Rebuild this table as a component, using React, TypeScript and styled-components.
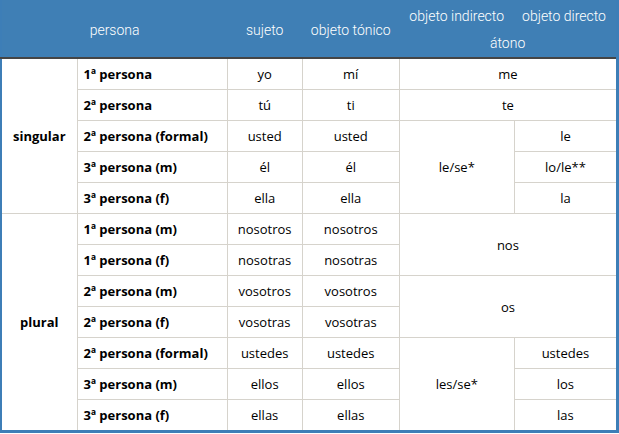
import React from "react";
import styled, { createGlobalStyle } from "styled-components";

const Global = createGlobalStyle`
  html, body { margin: 0; padding: 0; background: #ffffff; }
  body { font-family: "Open Sans", "Noto Sans", sans-serif; }
`;

const Table = styled.table`
  border-collapse: collapse;
  table-layout: fixed;
  width: 619px;
  font-family: "Open Sans", "Noto Sans", sans-serif;
  font-size: 13px;
  color: #000;
  border-left: 2px solid #3d7eb7;
  border-right: 3px solid #3d7eb7;
  border-bottom: 3px solid #3d7eb7;
`;

const HeadCell = styled.th`
  background: #3f7fb5;
  color: #ffffff;
  font-weight: 300;
  font-family: "Roboto", "Open Sans", sans-serif;
  font-size: 14px;
  line-height: 27px;
  height: 54px;
  padding: 3px 4px 0;
  text-align: center;
  border-bottom: 2px solid #454545;
`;

const Gap = styled.span`
  display: inline-block;
  width: 18px;
`;

const Cell = styled.td<{ $bold?: boolean; $align?: "left" | "center" }>`
  height: 30px;
  padding: 0 6px;
  border: 1px solid #d6d3cc;
  text-align: ${(p) => p.$align ?? "center"};
  font-weight: ${(p) => (p.$bold ? 700 : 400)};
  white-space: nowrap;
`;

const GroupCell = styled(Cell)`
  border-left: none;
`;

type Row = {
  persona: string;
  sujeto: string;
  tonico: string;
};

const singular: Row[] = [
  { persona: "1ª persona", sujeto: "yo", tonico: "mí" },
  { persona: "2ª persona", sujeto: "tú", tonico: "ti" },
  { persona: "2ª persona (formal)", sujeto: "usted", tonico: "usted" },
  { persona: "3ª persona (m)", sujeto: "él", tonico: "él" },
  { persona: "3ª persona (f)", sujeto: "ella", tonico: "ella" },
];

const plural: Row[] = [
  { persona: "1ª persona (m)", sujeto: "nosotros", tonico: "nosotros" },
  { persona: "1ª persona (f)", sujeto: "nosotras", tonico: "nosotras" },
  { persona: "2ª persona (m)", sujeto: "vosotros", tonico: "vosotros" },
  { persona: "2ª persona (f)", sujeto: "vosotras", tonico: "vosotras" },
  { persona: "2ª persona (formal)", sujeto: "ustedes", tonico: "ustedes" },
  { persona: "3ª persona (m)", sujeto: "ellos", tonico: "ellos" },
  { persona: "3ª persona (f)", sujeto: "ellas", tonico: "ellas" },
];

export default function App() {
  return (
    <>
      <Global />
      <Table>
        <colgroup>
          <col style={{ width: 76 }} />
          <col style={{ width: 150 }} />
          <col style={{ width: 75 }} />
          <col style={{ width: 97 }} />
          <col style={{ width: 115 }} />
          <col style={{ width: 103 }} />
        </colgroup>
        <thead>
          <tr>
            <HeadCell colSpan={2}>persona</HeadCell>
            <HeadCell>sujeto</HeadCell>
            <HeadCell>objeto tónico</HeadCell>
            <HeadCell colSpan={2}>
              objeto indirecto<Gap />objeto directo
              <br />
              átono
            </HeadCell>
          </tr>
        </thead>
        <tbody>
          {singular.map((r, i) => (
            <tr key={r.persona + i}>
              {i === 0 && (
                <GroupCell rowSpan={5} $bold>
                  singular
                </GroupCell>
              )}
              <Cell $bold $align="left">
                {r.persona}
              </Cell>
              <Cell>{r.sujeto}</Cell>
              <Cell>{r.tonico}</Cell>
              {i === 0 && <Cell colSpan={2}>me</Cell>}
              {i === 1 && <Cell colSpan={2}>te</Cell>}
              {i === 2 && <Cell rowSpan={3}>le/se*</Cell>}
              {i === 2 && <Cell>le</Cell>}
              {i === 3 && <Cell>lo/le**</Cell>}
              {i === 4 && <Cell>la</Cell>}
            </tr>
          ))}
          {plural.map((r, i) => (
            <tr key={r.persona + i}>
              {i === 0 && (
                <GroupCell rowSpan={7} $bold>
                  plural
                </GroupCell>
              )}
              <Cell $bold $align="left">
                {r.persona}
              </Cell>
              <Cell>{r.sujeto}</Cell>
              <Cell>{r.tonico}</Cell>
              {i === 0 && (
                <Cell colSpan={2} rowSpan={2}>
                  nos
                </Cell>
              )}
              {i === 2 && (
                <Cell colSpan={2} rowSpan={2}>
                  os
                </Cell>
              )}
              {i === 4 && <Cell rowSpan={3}>les/se*</Cell>}
              {i === 4 && <Cell>ustedes</Cell>}
              {i === 5 && <Cell>los</Cell>}
              {i === 6 && <Cell>las</Cell>}
            </tr>
          ))}
        </tbody>
      </Table>
    </>
  );
}
